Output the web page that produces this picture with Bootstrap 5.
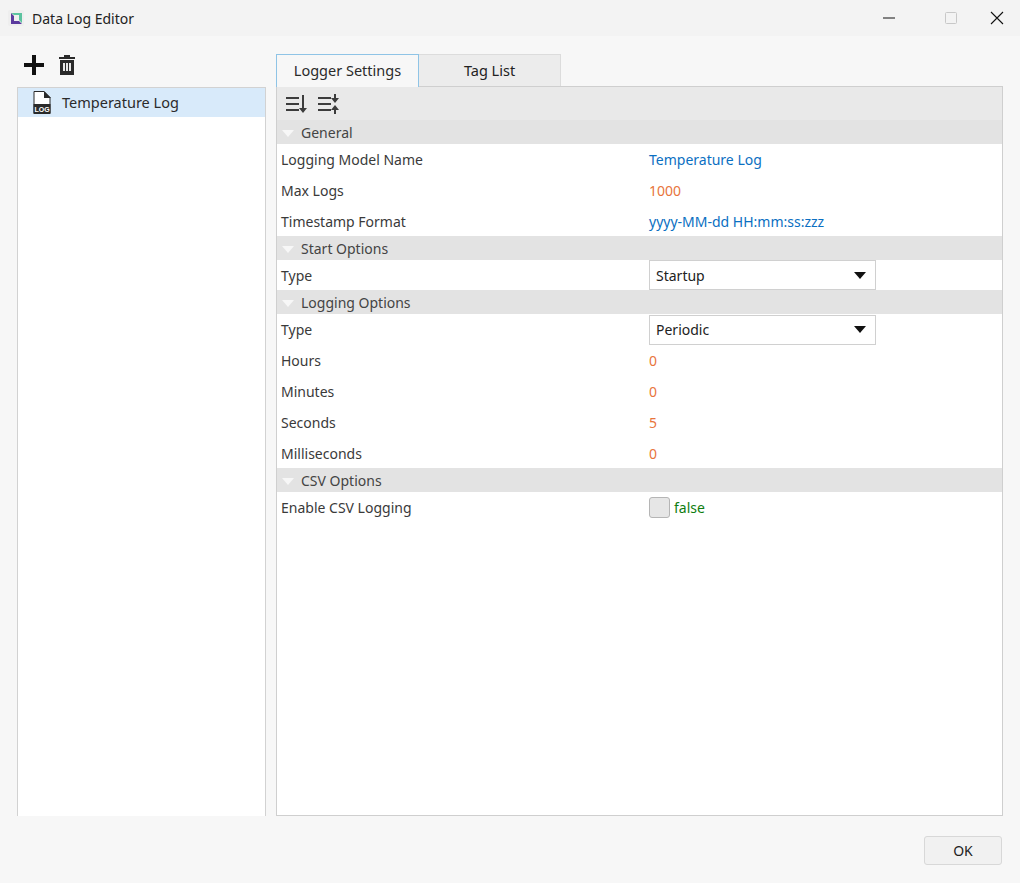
<!DOCTYPE html>
<html>
<head>
    <title>Data Log Editor</title>
    <meta charset="utf-8">
    <link href="https://cdn.jsdelivr.net/npm/bootstrap@5.3.0/dist/css/bootstrap.min.css" rel="stylesheet">
    <style>
        html, body { height: 883px; overflow: hidden; }
        body { background: #f7f7f7; font-family: "Noto Sans", "Open Sans", sans-serif; font-size: 14px; color: #2b2b2b; }
        .title-bar { height: 36px; background: #f3f3f3; padding-left: 8px; color: #222; }
        .app-logo { width: 16px; height: 16px; margin-right: 8px; }
        .win-btn { width: 46px; height: 36px; }
        .work-area { height: 780px; padding: 18px 17px 0 17px; }
        .left-side { width: 249px; margin-right: 10px; }
        .tool-strip { height: 33px; padding-left: 6px; gap: 13px; }
        .log-list { height: 729px; background: #fff; border: 1px solid #d2d2d2; border-bottom: 0; border-radius: 0; }
        .log-item { height: 29px; background: #d8eafa; padding-left: 15px; gap: 11px; font-size: 14.5px; }
        .right-side { width: 727px; }
        .tab-strip { height: 32px; }
        .tab-one, .tab-two { width: 143px; font-size: 14.5px; }
        .tab-one { background: #f7f7f7; border: 1px solid #8fc4e6; border-bottom: 0; height: 33px; position: relative; z-index: 1; }
        .tab-two { width: 142px; background: #ececec; border: 1px solid #dcdcdc; border-left: 0; border-bottom: 0; color: #222; }
        .prop-panel { height: 730px; background: #fff; border: 1px solid #cfcfcf; }
        .prop-tools { height: 33px; background: #e9e9e9; padding-left: 9px; gap: 11px; }
        .group-head { height: 24px; background: #e3e3e3; padding-left: 5px; color: #444; }
        .group-arrow { width: 0; height: 0; border-left: 6px solid transparent; border-right: 6px solid transparent; border-top: 7px solid #f7f7f7; margin-right: 7px; margin-top: 2px; }
        .prop-row { height: 31px; padding-left: 4px; color: #3a3a3a; }
        .prop-row.short-row { height: 30px; }
        .prop-name { width: 368px; }
        .val-blue { color: #0b6fc2; }
        .val-orange { color: #e8743b; }
        .val-green { color: #0f7d0f; }
        .combo-box { width: 227px; height: 30px; margin-top: 0; border: 1px solid #d0d0d0; padding: 0 9px 0 6px; color: #222; }
        .combo-arrow { width: 0; height: 0; border-left: 6px solid transparent; border-right: 6px solid transparent; border-top: 7px solid #111; }
        .fake-check { width: 21px; height: 21px; background: #e6e6e6; border: 1px solid #b5b5b5; border-radius: 3px; margin-right: 4px; }
        .bottom-bar { padding: 20px 18px 0 0; }
        .ok-btn { width: 78px; height: 29px; background: #f1f1f1; border: 1px solid #d8d8d8; border-radius: 3px; font-size: 14px; color: #222; padding: 0; }
    </style>
</head>
<body>
    <div class="title-bar d-flex align-items-center">
        <svg class="app-logo" viewBox="0 0 16 16">
            <rect x="0" y="0" width="16" height="16" rx="2" fill="#eeeeee"/>
            <path d="M3 3h11v10l-3-3V5H6z" fill="#5cc3a0"/>
            <path d="M3 3l3 3v5h5l3 3H3z" fill="#5b3a9e"/>
        </svg>
        <span>Data Log Editor</span>
        <div class="ms-auto d-flex">
            <div class="win-btn d-flex align-items-center justify-content-center">
                <svg width="14" height="14" viewBox="0 0 14 14"><path d="M1 7h12" stroke="#111" stroke-width="1"/></svg>
            </div>
            <div class="win-btn d-flex align-items-center justify-content-center ms-3">
                <svg width="14" height="14" viewBox="0 0 14 14"><rect x="1.5" y="1.5" width="11" height="11" rx="1" fill="none" stroke="#c8c8c8"/></svg>
            </div>
            <div class="win-btn d-flex align-items-center justify-content-center">
                <svg width="14" height="14" viewBox="0 0 14 14"><path d="M1 1l12 12M13 1L1 13" stroke="#111" stroke-width="1.1"/></svg>
            </div>
        </div>
    </div>

    <div class="work-area d-flex">
        <div class="left-side">
            <div class="tool-strip d-flex align-items-start">
                <svg width="22" height="22" viewBox="0 0 22 22"><path d="M9 1h4v8h8v4h-8v8H9v-8H1V9h8z" fill="#111" transform="translate(0 0)"/></svg>
                <svg width="18" height="22" viewBox="0 0 18 22">
                    <path d="M6 1h6v2h5v2H1V3h5zM2 6h14v15H2z" fill="#2a2a2a"/>
                    <path d="M5.5 9h2v8h-2zM8.5 9h2v8h-2zM11.5 9h2v8h-2z" fill="#e8e8e8" transform="translate(-.5 0)"/>
                </svg>
            </div>
            <div class="log-list">
                <div class="log-item d-flex align-items-center">
                    <svg width="18" height="23" viewBox="0 0 18 23">
                        <path d="M1 .5h10l6 6V22H1z" fill="#fff" stroke="#2a2a2a" stroke-width="1"/>
                        <path d="M11 0l7 7h-7z" fill="#2a2a2a"/>
                        <rect x="0.5" y="13" width="17" height="10" fill="#2a2a2a"/>
                        <text x="9" y="21" text-anchor="middle" font-family="Liberation Sans" font-size="7" font-weight="700" fill="#fff">LOG</text>
                    </svg>
                    <span>Temperature Log</span>
                </div>
            </div>
        </div>

        <div class="right-side">
            <div class="tab-strip d-flex">
                <div class="tab-one d-flex align-items-center justify-content-center">Logger Settings</div>
                <div class="tab-two d-flex align-items-center justify-content-center">Tag List</div>
            </div>
            <div class="prop-panel">
                <div class="prop-tools d-flex align-items-center">
                    <svg width="21" height="20" viewBox="0 0 21 20">
                        <path d="M0 3h13v2H0zM0 9h13v2H0zM0 15h13v2H0z" fill="#3c3c3c"/>
                        <path d="M16 1h2v13h3l-4 5-4-5h3z" fill="#3c3c3c"/>
                    </svg>
                    <svg width="21" height="20" viewBox="0 0 21 20">
                        <path d="M0 3h13v2H0zM0 9h13v2H0zM0 15h13v2H0z" fill="#3c3c3c"/>
                        <path d="M16 0h2v4h3l-4 5-4-5h3zM17 11l4 5h-3v4h-2v-4h-3z" fill="#3c3c3c"/>
                    </svg>
                </div>

                <div class="group-head d-flex align-items-center"><span class="group-arrow"></span><span>General</span></div>
                <div class="prop-row d-flex align-items-center"><span class="prop-name">Logging Model Name</span><span class="val-blue">Temperature Log</span></div>
                <div class="prop-row d-flex align-items-center"><span class="prop-name">Max Logs</span><span class="val-orange">1000</span></div>
                <div class="prop-row short-row d-flex align-items-center"><span class="prop-name">Timestamp Format</span><span class="val-blue">yyyy-MM-dd HH:mm:ss:zzz</span></div>

                <div class="group-head d-flex align-items-center"><span class="group-arrow"></span><span>Start Options</span></div>
                <div class="prop-row short-row d-flex align-items-center">
                    <span class="prop-name">Type</span>
                    <div class="combo-box d-flex align-items-center justify-content-between"><span>Startup</span><span class="combo-arrow"></span></div>
                </div>

                <div class="group-head d-flex align-items-center"><span class="group-arrow"></span><span>Logging Options</span></div>
                <div class="prop-row d-flex align-items-center">
                    <span class="prop-name">Type</span>
                    <div class="combo-box d-flex align-items-center justify-content-between"><span>Periodic</span><span class="combo-arrow"></span></div>
                </div>
                <div class="prop-row d-flex align-items-center"><span class="prop-name">Hours</span><span class="val-orange">0</span></div>
                <div class="prop-row d-flex align-items-center"><span class="prop-name">Minutes</span><span class="val-orange">0</span></div>
                <div class="prop-row d-flex align-items-center"><span class="prop-name">Seconds</span><span class="val-orange">5</span></div>
                <div class="prop-row short-row d-flex align-items-center"><span class="prop-name">Milliseconds</span><span class="val-orange">0</span></div>

                <div class="group-head d-flex align-items-center"><span class="group-arrow"></span><span>CSV Options</span></div>
                <div class="prop-row d-flex align-items-center">
                    <span class="prop-name">Enable CSV Logging</span>
                    <span class="fake-check"></span><span class="val-green">false</span>
                </div>
            </div>
        </div>
    </div>

    <div class="bottom-bar d-flex justify-content-end">
        <button type="button" class="ok-btn">OK</button>
    </div>

    <script src="https://cdn.jsdelivr.net/npm/bootstrap@5.3.0/dist/js/bootstrap.bundle.min.js"></script>
</body>
</html>
